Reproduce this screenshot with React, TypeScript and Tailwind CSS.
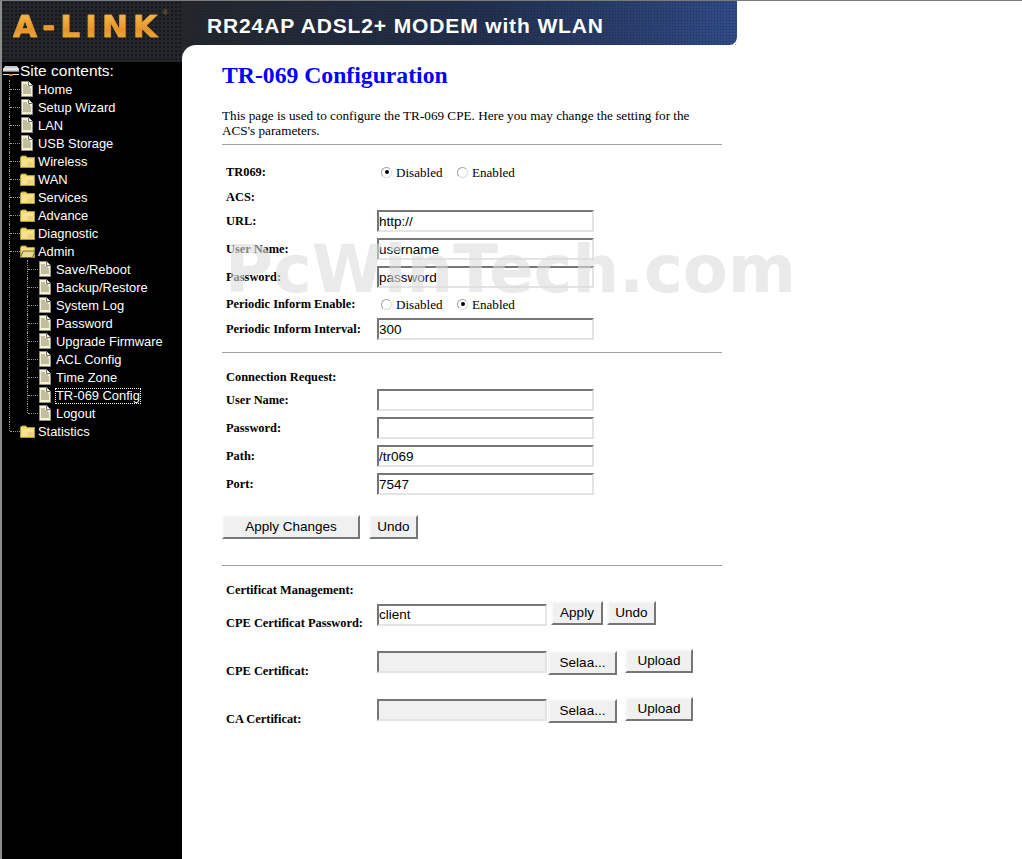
import React from 'react';

const sans = "font-['Liberation_Sans',Arial,sans-serif]";

const DocIcon = () => (
  <svg width="13" height="16" viewBox="0 0 13 16" className="shrink-0">
    <path d="M1.5 .5H8.5L12.5 4.5V15.5H1.5Z" fill="#f7f3cf" stroke="#8f8f8f" />
    <path d="M8.5 .5V4.5H12.5" fill="#fff" stroke="#6f6f6f" />
    <path d="M3 4H7M3 6H10M3 8H11M3 10H11M3 12H11" stroke="#8a8a70" />
  </svg>
);

const FolderIcon = ({ open }: { open?: boolean }) => (
  <svg width="15" height="13" viewBox="0 0 15 13" className="shrink-0">
    <path d="M.5 2.5L1.5 1H6L7 2.5H14.5V12.5H.5Z" fill="#f2dc6e" stroke="#a89a3a" />
    <path d="M2 4H13V11H2Z" fill="#f6e48c" />
    <path d="M8 7H13V11H7Z" fill="#e8c97a" opacity=".7" />
    {open && <path d="M3 6H15L12.5 12.5H.5Z" fill="#e9d98e" stroke="#6e6a3c" />}
  </svg>
);

const TreeRow = ({
  label,
  last,
  folder,
  open,
  selected,
}: {
  label: string;
  last?: boolean;
  folder?: boolean;
  open?: boolean;
  selected?: boolean;
}) => (
  <div className="flex h-[18px] items-center">
    <div className={`w-0 self-start border-l border-dotted border-[#9a9a9a] ${last ? 'h-[9px]' : 'h-[18px]'}`} />
    <div className="h-0 w-[10px] border-t border-dotted border-[#9a9a9a]" />
    <div className="flex w-[15px] justify-start">{folder ? <FolderIcon open={open} /> : <DocIcon />}</div>
    <span
      className={`ml-[2px] mt-[1px] whitespace-nowrap px-px leading-[16px] ${
        selected ? 'outline outline-1 outline-dotted outline-white -outline-offset-1' : ''
      }`}
    >
      {label}
    </span>
  </div>
);

const Sidebar = () => (
  <div className={`flex-1 bg-black text-[12.9px] text-white ${sans}`}>
    <div className="flex h-[18px] items-center">
      <svg width="16" height="12" viewBox="0 0 16 12" className="ml-[1px] shrink-0">
        <path d="M2 1H14L16 4V7H0V4Z" fill="#c9c9c9" />
        <path d="M0 4H16" stroke="#fff" />
        <path d="M0 6.5H16" stroke="#7e7e7e" />
        <path d="M0 9.5H16" stroke="#e0e0e0" />
        <path d="M6 9H10V11H6Z" fill="#d77a2b" />
      </svg>
      <span className="ml-[1px] text-[15.5px] leading-[18px]">Site contents:</span>
    </div>
    <div className="ml-[7px]">
      <TreeRow label="Home" />
      <TreeRow label="Setup Wizard" />
      <TreeRow label="LAN" />
      <TreeRow label="USB Storage" />
      <TreeRow label="Wireless" folder />
      <TreeRow label="WAN" folder />
      <TreeRow label="Services" folder />
      <TreeRow label="Advance" folder />
      <TreeRow label="Diagnostic" folder />
      <TreeRow label="Admin" folder open />
      <div className="flex">
        <div className="w-0 border-l border-dotted border-[#9a9a9a]" />
        <div className="ml-[17px]">
          <TreeRow label="Save/Reboot" />
          <TreeRow label="Backup/Restore" />
          <TreeRow label="System Log" />
          <TreeRow label="Password" />
          <TreeRow label="Upgrade Firmware" />
          <TreeRow label="ACL Config" />
          <TreeRow label="Time Zone" />
          <TreeRow label="TR-069 Config" selected />
          <TreeRow label="Logout" last />
        </div>
      </div>
      <TreeRow label="Statistics" folder last />
    </div>
  </div>
);

const Field = ({ value, width = 'w-[217px]', disabled }: { value?: string; width?: string; disabled?: boolean }) => (
  <input
    readOnly
    value={value ?? ''}
    className={`h-[22px] ${width} border-2 border-t-[#767676] border-l-[#767676] border-r-[#e4e4e4] border-b-[#e4e4e4] px-0 text-[13.5px] text-black outline-none ${sans} ${
      disabled ? 'bg-[#f0f0f0]' : 'bg-white'
    }`}
  />
);

const Btn = ({ children, className = '' }: { children: React.ReactNode; className?: string }) => (
  <button
    className={`h-[24px] border-2 border-t-[#f8f8f8] border-l-[#f8f8f8] border-r-[#767676] border-b-[#767676] bg-[#f0f0f0] text-[13.5px] leading-none text-black ${sans} ${className}`}
  >
    {children}
  </button>
);

const Radio = ({ checked }: { checked?: boolean }) => (
  <span className="flex size-[11px] items-center justify-center rounded-full border border-[#a0a0a0] border-r-[#dcdcdc] border-b-[#dcdcdc] bg-white">
    {checked && <span className="size-[4px] rounded-full bg-black" />}
  </span>
);

const RadioPair = ({ enabled }: { enabled?: boolean }) => (
  <div className="flex items-center pl-[4px] text-[13.1px] leading-none">
    <Radio checked={!enabled} />
    <span className="ml-[4px] mt-[2px] w-[61px]">Disabled</span>
    <Radio checked={enabled} />
    <span className="ml-[4px] mt-[2px]">Enabled</span>
  </div>
);

const Row = ({ label, height, children }: { label: string; height: string; children?: React.ReactNode }) => (
  <div className={`flex items-center ${height}`}>
    <div className="w-[155px] whitespace-nowrap pl-[4px] text-[12.4px] font-bold leading-none">{label}</div>
    {children}
  </div>
);

const Divider = ({ className = '' }: { className?: string }) => <div className={`h-px w-[500px] bg-[#a0a0a0] ${className}`} />;

const CertRow = ({ label }: { label: string }) => (
  <div className="flex h-[48px] items-start">
    <div className="mt-[17px] w-[155px] whitespace-nowrap pl-[4px] text-[12.4px] font-bold leading-none">{label}</div>
    <div className="mt-[1px]"><Field disabled width="w-[170px]" /></div>
    <Btn className="ml-[1px] mt-[3px] h-[22px] w-[69px]">Selaa...</Btn>
    <Btn className="ml-[8px] mt-[1px] w-[68px]">Upload</Btn>
  </div>
);

export default function App() {
  return (
    <div className="relative h-[859px] w-[1022px] overflow-hidden bg-white font-['Liberation_Serif','Times_New_Roman',serif] text-black">
      <div className="h-px bg-[#7a7a7a]" />
      <div className="flex h-[858px] border-l-2 border-[#8c8c8c]">
        <div className="flex w-[180px] shrink-0 flex-col">
          <div className="relative flex h-[61px] items-start bg-[#23262b] bg-[radial-gradient(#15171a_1px,transparent_1px)] bg-[length:4px_4px] pl-[11px] pt-[7px]">
            <span className="bg-[linear-gradient(180deg,#f6c95a,#e6942a_60%,#f0b545)] bg-clip-text font-['DejaVu_Sans',sans-serif] text-[31px] font-bold leading-[36px] tracking-[5.2px] text-transparent [-webkit-text-stroke:0.6px_#e8a030]">
              A-LINK
            </span>
            <span className={`mt-[1px] text-[8px] leading-none text-[#9a6a35] ${sans}`}>®</span>
          </div>
          <Sidebar />
        </div>
        <div className="flex-1">
          <div className="w-[555px] rounded-br-[8px] bg-[linear-gradient(90deg,#23262b,#22304f_55%,#2f4a86)]">
            <div className={`flex h-[44px] items-center bg-[radial-gradient(#15171a66_1px,transparent_1px)] bg-[length:3px_3px] pl-[25px] pt-[6px] text-[21px] font-bold tracking-[.87px] text-white ${sans}`}>
              RR24AP ADSL2+ MODEM with WLAN
            </div>
          </div>
          <div className="bg-[#23262b]">
            <div className="h-[814px] rounded-tl-[14px] bg-white pl-[40px]">
              <h1 className="pt-[16px] text-[23.7px] font-bold leading-[28px] text-[#0000ff]">TR-069 Configuration</h1>
              <p className="mt-[19px] w-[475px] text-[13.2px] leading-[15px]">
                This page is used to configure the TR-069 CPE. Here you may change the setting for the ACS's parameters.
              </p>
              <Divider className="mt-[6px]" />
              <div className="mt-[12px]">
                <Row label="TR069:" height="h-[30px]"><RadioPair /></Row>
                <Row label="ACS:" height="h-[20px]" />
                <Row label="URL:" height="h-[28px]"><Field value="http://" /></Row>
                <Row label="User Name:" height="h-[28px]"><Field value="username" /></Row>
                <Row label="Password:" height="h-[28px]"><Field value="password" /></Row>
                <Row label="Periodic Inform Enable:" height="h-[26px]"><RadioPair enabled /></Row>
                <Row label="Periodic Inform Interval:" height="h-[24px]"><Field value="300" /></Row>
              </div>
              <Divider className="mt-[11px]" />
              <div className="mt-[11px]">
                <Row label="Connection Request:" height="h-[22px] pt-[4px]" />
                <Row label="User Name:" height="h-[28px]"><Field /></Row>
                <Row label="Password:" height="h-[28px]"><Field /></Row>
                <Row label="Path:" height="h-[28px]"><Field value="/tr069" /></Row>
                <Row label="Port:" height="h-[28px]"><Field value="7547" /></Row>
              </div>
              <div className="mt-[17px] flex items-start">
                <Btn className="w-[138px]">Apply Changes</Btn>
                <Btn className="ml-[9px] w-[49px]">Undo</Btn>
              </div>
              <Divider className="mt-[26px]" />
              <div className="mt-[11px]">
                <Row label="Certificat Management:" height="h-[23px] pt-[4px]" />
                <div className="flex h-[48px] items-start">
                  <div className="mt-[17px] w-[155px] whitespace-nowrap pl-[4px] text-[12.4px] font-bold leading-none">CPE Certificat Password:</div>
                  <div className="mt-[2px]"><Field value="client" width="w-[170px]" /></div>
                  <Btn className="ml-[4px] mt-[1px] w-[52px]">Apply</Btn>
                  <Btn className="ml-[4px] mt-[1px] w-[49px]">Undo</Btn>
                </div>
                <CertRow label="CPE Certificat:" />
                <CertRow label="CA Certificat:" />
              </div>
            </div>
          </div>
        </div>
      </div>
      <div className="pointer-events-none absolute left-[225px] top-[229px] whitespace-nowrap font-['DejaVu_Sans',sans-serif] text-[65.5px] font-bold leading-[80px] text-[#dcdcdc]/60">
        PcWinTech.com
      </div>
    </div>
  );
}
